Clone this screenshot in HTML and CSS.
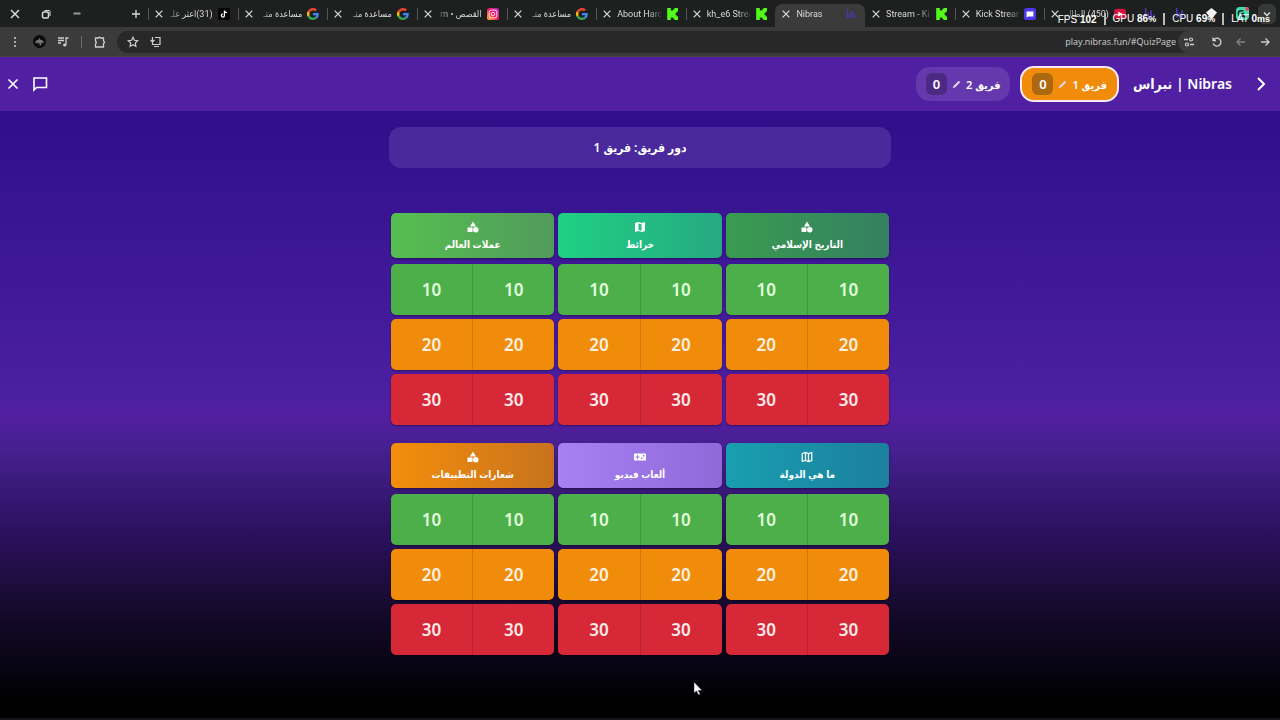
FILE: index.html
```html
<!DOCTYPE html>
<html lang="ar" dir="rtl">
<head>
<meta charset="utf-8">
<title>Nibras</title>
<link rel="stylesheet" href="styles.css">
</head>
<body>
<svg class="defs" aria-hidden="true">
  <symbol id="x" viewBox="0 0 12 12"><path d="M2 2l8 8M10 2l-8 8" fill="none" stroke="currentColor" stroke-width="1.500"/></symbol>
  <symbol id="google" viewBox="0 0 48 48"><path fill="#ea4335" d="M24 9.500c3.500 0 6.700 1.200 9.200 3.600l6.900-6.900C35.900 2.400 30.500 0 24 0 14.600 0 6.500 5.400 2.600 13.200l8 6.200C12.400 13.700 17.700 9.500 24 9.500z"/><path fill="#4285f4" d="M47 24.500c0-1.600-.2-3.100-.4-4.500H24v9h12.900c-.6 3-2.300 5.500-4.800 7.200l7.700 6C44.400 38 47 31.800 47 24.500z"/><path fill="#fbbc05" d="M10.500 28.600a14.500 14.500 0 010-9.200l-8-6.200a24 24 0 000 21.600z"/><path fill="#34a853" d="M24 48c6.500 0 11.900-2.100 15.900-5.800l-7.700-6c-2.200 1.500-4.900 2.300-8.200 2.300-6.300 0-11.600-4.200-13.500-9.900l-8 6.200C6.500 42.600 14.600 48 24 48z"/></symbol>
  <symbol id="kick" viewBox="0 0 10 10"><path fill="#53fc18" d="M1 0h3v2h2V1h1V0h3v3H9v1H8v2h1v1h1v3H7V9H6V8H4v2H1z"/></symbol>
  <symbol id="bars" viewBox="0 0 12 12"><path d="M2.500 1v9M5 5v5M7.500 3v7M10 7v3" fill="none" stroke="#4d37b0" stroke-width="1.500"/></symbol>
  <symbol id="shapes" viewBox="0 0 24 24"><path fill="currentColor" d="M12 1l6 10H6z"/><path fill="currentColor" d="M1 13h10v9H1z"/><circle cx="17.500" cy="17.500" r="5.500" fill="currentColor"/></symbol>
  <symbol id="map-solid" viewBox="0 0 24 24"><path fill="currentColor" fill-rule="evenodd" d="M2 4l6-2 8 2 6-2v18l-6 2-8-2-6 2zM9 5v13l6 1.500v-13z"/></symbol>
  <symbol id="map-line" viewBox="0 0 24 24"><path fill="none" stroke="currentColor" stroke-width="2.500" d="M2.500 5L9 3l6 2 6.500-2v16L15 21l-6-2-6.500 2zM9 3v16M15 5v16"/></symbol>
  <symbol id="gamepad" viewBox="0 0 24 24"><path fill="currentColor" fill-rule="evenodd" d="M1 5h22q1 0 1 1.500v11q0 1.500-1 1.500H1q-1 0-1-1.500v-11Q0 5 1 5zM6 8v3H3v2h3v3h2v-3h3v-2H8V8zM14 13v3h3v-3zM18 8v3h3V8z"/></symbol>
  <symbol id="pencil" viewBox="0 0 12 12"><path d="M1 11l1-3 7-7 2 2-7 7z" fill="currentColor"/></symbol>
</svg>

<header class="browser">
  <div class="tabstrip">
    <button class="tab-search" aria-label="Search tabs"><svg viewBox="0 0 12 12"><path d="M3 4.500l3 3 3-3" fill="none" stroke="currentColor" stroke-width="1.500"/></svg></button>
    <div class="pinned"><svg viewBox="0 0 14 14"><rect width="14" height="14" rx="4" fill="#42d9ab"/><path d="M8 4H5.500a3 3 0 000 6H8V7H6M10 9v3M8.500 10.500h3" fill="none" stroke="#10231e" stroke-width="1.500"/><circle cx="12" cy="2" r="2" fill="#f33c5e"/></svg></div>
    <div class="pinned"><svg viewBox="0 0 14 14"><path d="M7 1l6 5-6 7-6-7z" fill="#f2f2f2"/></svg></div>
    <div class="pinned"><svg><use href="#bars"/></svg></div>
    <div class="pinned"><svg><use href="#bars"/></svg></div>
    <div class="tab"><svg viewBox="0 0 14 14"><rect y="1" width="14" height="12" rx="4" fill="#d8123c"/><path d="M5 4l5 3-5 3z" fill="#fff"/></svg><span dir="rtl">(450) الطالب</span><button aria-label="Close tab"><svg><use href="#x"/></svg></button></div>
    <div class="tab"><svg viewBox="0 0 14 14"><rect width="14" height="14" rx="3" fill="#4b38e8"/><path d="M3 4h8v6H5l-2 1z" fill="#fff"/></svg><span dir="ltr">Kick Stream</span><button aria-label="Close tab"><svg><use href="#x"/></svg></button></div>
    <div class="tab before"><svg><use href="#kick"/></svg><span dir="ltr">Stream - Ki</span><button aria-label="Close tab"><svg><use href="#x"/></svg></button></div>
    <div class="tab active"><svg><use href="#bars"/></svg><span dir="ltr">Nibras</span><button aria-label="Close tab"><svg><use href="#x"/></svg></button></div>
    <div class="tab"><svg><use href="#kick"/></svg><span dir="ltr">kh_e6 Strea</span><button aria-label="Close tab"><svg><use href="#x"/></svg></button></div>
    <div class="tab"><svg><use href="#kick"/></svg><span dir="ltr">About Haro</span><button aria-label="Close tab"><svg><use href="#x"/></svg></button></div>
    <div class="tab"><svg><use href="#google"/></svg><span dir="rtl">مساعدة متـ</span><button aria-label="Close tab"><svg><use href="#x"/></svg></button></div>
    <div class="tab"><svg viewBox="0 0 14 14"><defs><linearGradient id="ig" x1="0" y1="1" x2="1" y2="0"><stop stop-color="#ffbe2e"/><stop offset=".5" stop-color="#f3195d"/><stop offset="1" stop-color="#b92bd0"/></linearGradient></defs><rect width="14" height="14" rx="3" fill="url(#ig)"/><rect x="2.500" y="2.500" width="9" height="9" rx="2.500" fill="none" stroke="#fff"/><circle cx="7" cy="7" r="2" fill="none" stroke="#fff"/></svg><span dir="rtl">القصص • m</span><button aria-label="Close tab"><svg><use href="#x"/></svg></button></div>
    <div class="tab"><svg><use href="#google"/></svg><span dir="rtl">مساعدة متـ</span><button aria-label="Close tab"><svg><use href="#x"/></svg></button></div>
    <div class="tab"><svg><use href="#google"/></svg><span dir="rtl">مساعدة متـ</span><button aria-label="Close tab"><svg><use href="#x"/></svg></button></div>
    <div class="tab"><svg viewBox="0 0 14 14"><rect width="14" height="14" rx="2" fill="#000"/><path d="M7.500 3v6a1.800 1.800 0 11-2-2M7.500 3q.5 2.500 3 2.500" fill="none" stroke="#fff" stroke-width="1.500"/></svg><span dir="rtl">(31)اعثر علـ</span><button aria-label="Close tab"><svg><use href="#x"/></svg></button></div>
    <div class="window-controls">
      <button class="new-tab" aria-label="New tab"><svg viewBox="0 0 12 12"><path d="M6 2v8M2 6h8" stroke="currentColor" stroke-width="1.300"/></svg></button>
      <button aria-label="Minimize"><svg viewBox="0 0 12 12"><path d="M2.500 5.500h7" stroke="#999" stroke-width="2"/></svg></button>
      <button aria-label="Restore"><svg viewBox="0 0 12 12"><rect x="2.500" y="4" width="6" height="6" rx="1.500" fill="none" stroke="currentColor" stroke-width="1.500"/><path d="M4.500 2.500H9q1 0 1 1V8" fill="none" stroke="currentColor"/></svg></button>
      <button aria-label="Close window"><svg><use href="#x"/></svg></button>
    </div>
    <div class="stats" dir="ltr"><span>FPS <b>102</b></span><i></i><span>GPU <b>86<small>%</small></b></span><i></i><span>CPU <b>69<small>%</small></b></span><i></i><span>LAT <b>0<small>ms</small></b></span></div>
  </div>
  <div class="toolbar">
    <button aria-label="Back"><svg viewBox="0 0 12 12"><path d="M2 6h8M6.500 2.500L10 6 6.500 9.500" fill="none" stroke="currentColor" stroke-width="1.300"/></svg></button>
    <button class="dim" aria-label="Forward"><svg viewBox="0 0 12 12"><path d="M10 6H2M5.500 2.500L2 6l3.500 3.500" fill="none" stroke="currentColor" stroke-width="1.300"/></svg></button>
    <button aria-label="Reload"><svg viewBox="0 0 12 12"><path d="M2.500 4a4 4 0 11-.3 3.500M2 1.500V4.500h3" fill="none" stroke="currentColor" stroke-width="1.300"/></svg></button>
    <div class="address">
      <button class="site" aria-label="Site settings"><svg viewBox="0 0 12 12"><path d="M1 3.500h4M7 8.500h4" stroke="currentColor" stroke-width="1.300"/><circle cx="8" cy="3.500" r="1.500" fill="none" stroke="currentColor" stroke-width="1.200"/><circle cx="4" cy="8.500" r="1.500" fill="none" stroke="currentColor" stroke-width="1.200"/></svg></button>
      <input dir="ltr" aria-label="Address" value="play.nibras.fun/#QuizPage">
      <button aria-label="Install"><svg viewBox="0 0 12 12"><path d="M6 1.500h5v7H3.500V6.500M5 10.500h5M3.500 1v5M1.500 4l2 2 2-2" fill="none" stroke="currentColor" stroke-width="1.200"/></svg></button>
      <button aria-label="Bookmark"><svg viewBox="0 0 12 12"><path d="M6 1.300l1.400 3 3.300.4-2.400 2.300.6 3.300L6 8.700l-2.900 1.600.6-3.300L1.300 4.700l3.300-.4z" fill="none" stroke="currentColor" stroke-width="1.200"/></svg></button>
    </div>
    <div class="tools">
      <button aria-label="Extensions"><svg viewBox="0 0 12 12"><path d="M1.500 2h3q1-1.500 2 0h3v3q2 1 0 2.500V11h-8V8q1.500-1.500 0-3z" fill="none" stroke="currentColor" stroke-width="1.300"/></svg></button>
      <span class="divider"></span>
      <button aria-label="Media"><svg viewBox="0 0 12 12"><path d="M1 2h6M1 4.500h6M1 7h3M9 9V2h2.500" fill="none" stroke="currentColor" stroke-width="1.300"/><circle cx="7.700" cy="9" r="1.600" fill="currentColor"/></svg></button>
      <button class="avatar" aria-label="Profile"><svg viewBox="0 0 14 14"><circle cx="7" cy="7" r="7" fill="#0b0b0b"/><path d="M2 9q1-4 4-4l1-2 1 2q3 0 4 4L9 8v3H7V8L5 10V8z" fill="#777"/></svg></button>
      <button aria-label="Menu"><svg viewBox="0 0 12 12"><g fill="currentColor"><circle cx="6" cy="2" r="1"/><circle cx="6" cy="6" r="1"/><circle cx="6" cy="10" r="1"/></g></svg></button>
    </div>
  </div>
</header>

<div class="app">
  <header class="appbar">
    <button class="icon" aria-label="رجوع"><svg viewBox="0 0 16 16"><path d="M5 2l6 6-6 6" fill="none" stroke="currentColor" stroke-width="2"/></svg></button>
    <h1>Nibras | نبراس</h1>
    <button class="team current">فريق 1<svg><use href="#pencil"/></svg><span class="score">0</span></button>
    <button class="team">فريق 2<svg><use href="#pencil"/></svg><span class="score">0</span></button>
    <div class="actions">
      <button class="icon" aria-label="رسائل"><svg viewBox="0 0 16 16"><path d="M2 2h12.500v9.500H4.500L2 14z" fill="none" stroke="currentColor" stroke-width="1.600"/></svg></button>
      <button class="icon" aria-label="إغلاق"><svg viewBox="0 0 16 16"><path d="M3.500 3.500l9 9M12.500 3.500l-9 9" fill="none" stroke="currentColor" stroke-width="1.700"/></svg></button>
    </div>
  </header>
  <main class="quiz">
    <p class="turn">دور فريق: فريق 1</p>
    <div class="board">
      <section class="category">
        <h2 class="history"><svg><use href="#shapes"/></svg>التاريخ الإسلامي</h2>
        <div class="pair easy"><button>10</button><button>10</button></div>
        <div class="pair medium"><button>20</button><button>20</button></div>
        <div class="pair hard"><button>30</button><button>30</button></div>
      </section>
      <section class="category">
        <h2 class="maps"><svg><use href="#map-solid"/></svg>خرائط</h2>
        <div class="pair easy"><button>10</button><button>10</button></div>
        <div class="pair medium"><button>20</button><button>20</button></div>
        <div class="pair hard"><button>30</button><button>30</button></div>
      </section>
      <section class="category">
        <h2 class="currency"><svg><use href="#shapes"/></svg>عملات العالم</h2>
        <div class="pair easy"><button>10</button><button>10</button></div>
        <div class="pair medium"><button>20</button><button>20</button></div>
        <div class="pair hard"><button>30</button><button>30</button></div>
      </section>
      <section class="category">
        <h2 class="country"><svg><use href="#map-line"/></svg>ما هي الدولة</h2>
        <div class="pair easy"><button>10</button><button>10</button></div>
        <div class="pair medium"><button>20</button><button>20</button></div>
        <div class="pair hard"><button>30</button><button>30</button></div>
      </section>
      <section class="category">
        <h2 class="games"><svg><use href="#gamepad"/></svg>ألعاب فيديو</h2>
        <div class="pair easy"><button>10</button><button>10</button></div>
        <div class="pair medium"><button>20</button><button>20</button></div>
        <div class="pair hard"><button>30</button><button>30</button></div>
      </section>
      <section class="category">
        <h2 class="logos"><svg><use href="#shapes"/></svg>شعارات التطبيقات</h2>
        <div class="pair easy"><button>10</button><button>10</button></div>
        <div class="pair medium"><button>20</button><button>20</button></div>
        <div class="pair hard"><button>30</button><button>30</button></div>
      </section>
    </div>
  </main>
</div>
<svg class="cursor" viewBox="0 0 10 15" aria-hidden="true"><path d="M1 1v11l2.500-2 2 4 1.700-1-2-3.500H9z" fill="#fff" stroke="#222" stroke-width=".5"/></svg>
</body>
</html>
```
FILE: styles.css
```css
* { box-sizing: border-box; }
body {
  margin: 0;
  min-height: 100vh;
  display: flex;
  flex-direction: column;
  font-family: "Noto Sans", "DejaVu Sans Condensed", "DejaVu Sans", sans-serif;
  color: #fff;
  background: #000;
}
button, input { font: inherit; color: inherit; background: none; border: 0; padding: 0; margin: 0; }
button { display: flex; align-items: center; justify-content: center; cursor: pointer; }
svg { display: block; flex: none; width: 12px; height: 12px; }
.defs { position: absolute; width: 0; height: 0; }

/* Browser frame */
.browser { background: #3b3b3b; color: #dadada; font-family: Roboto, "DejaVu Sans Condensed", "DejaVu Sans", sans-serif; }
.tabstrip { position: relative; display: flex; align-items: center; height: 27px; padding-right: 4px; background: #1e201f; }
.tab-search { width: 18px; height: 20px; border-radius: 6px; background: #373838; }
.pinned { width: 31px; display: flex; justify-content: center; }
.pinned svg { width: 13px; height: 13px; }
.tab {
  flex: 1 1 0;
  min-width: 0;
  align-self: stretch;
  display: flex;
  align-items: center;
  gap: 5px;
  padding: 0 8px 0 6px;
  font-size: 9px;
  background: linear-gradient(#555, #555) left center / 1px 12px no-repeat;
}
.tab > svg { width: 12px; height: 12px; }
.tab span {
  flex: 1;
  min-width: 0;
  white-space: nowrap;
  -webkit-mask-image: linear-gradient(to right, #000 70%, #0003);
  mask-image: linear-gradient(to right, #000 70%, #0003);
}
.tab span[dir="rtl"] {
  -webkit-mask-image: linear-gradient(to left, #000 70%, #0003);
  mask-image: linear-gradient(to left, #000 70%, #0003);
}
.tab button svg { width: 10px; height: 10px; }
.tab.before { background: none; }
.tab.active { margin-top: 4px; height: 23px; align-self: auto; padding-bottom: 4px; border-radius: 7px 7px 0 0; background: #3b3b3b; }
.window-controls { width: 148px; display: flex; justify-content: flex-end; }
.window-controls button { width: 31px; }
.window-controls .new-tab { width: 24px; margin-left: auto; }
.stats {
  position: absolute;
  top: 11px;
  right: 10px;
  display: flex;
  align-items: center;
  gap: 7px;
  color: #fff;
  font: 10px/15px "Liberation Sans", sans-serif;
  white-space: nowrap;
}
.stats i { width: 2px; height: 12px; background: #bbb; }
.stats small { font-size: 9px; }
.toolbar { display: flex; align-items: center; height: 30px; padding: 0 3px; color: #cfcfcf; border-bottom: 1px solid #4a4145; }
.toolbar button { width: 24px; height: 24px; }
.toolbar .dim { color: #838383; }
.address { flex: 1; display: flex; align-items: center; height: 22px; padding: 0 0 0 5px; margin: 0 5px; border-radius: 11px; background: #282828; }
.address input { flex: 1; min-width: 0; text-align: right; font-family: "Open Sans", sans-serif; font-size: 9px; padding: 0 2px; }
.address button { width: 22px; height: 22px; }
.address .site { border-radius: 50%; background: #3b3b3b; }
.tools { display: flex; align-items: center; }
.tools .divider { width: 1px; height: 12px; margin: 0 6px; background: #6b6b6b; }
.tools .avatar svg { width: 13px; height: 13px; }

/* Quiz application */
.app { flex: 1; display: flex; flex-direction: column; background: #000; }
.appbar { display: flex; align-items: center; height: 54px; padding: 0 11px 0 5px; background: #511fa2; }
.icon { width: 16px; height: 16px; }
.icon svg { width: 16px; height: 16px; }
.appbar h1 { margin: 0 21px 0 14px; font-size: 14px; line-height: 24px; font-weight: 600; }
.team {
  height: 34px;
  margin-left: 10px;
  padding: 0 10px;
  gap: 5px;
  border-radius: 14px;
  background: #6539ad;
  font-size: 11px;
  font-weight: 600;
  white-space: nowrap;
}
.team svg { width: 9px; height: 9px; color: #e4d3ee; }
.team.current { height: 36px; border: 2px solid #fbe9f4; background: #f08c0a; }
.score { width: 21px; height: 22px; line-height: 22px; border-radius: 6px; background: #4c2a84; font-size: 13px; }
.current .score { background: #aa680f; }
.actions { margin-right: auto; display: flex; gap: 11px; }
.quiz {
  flex: 1;
  padding: 16px 16px 62px;
  display: flex;
  flex-direction: column;
  align-items: center;
  border-bottom: 2px solid #15151b;
  background: linear-gradient(#2f0f8b, #4b1fa0 47%, #521fa2 50%, #45208e 56%, #2c1160 69%, #180b30 81%, #04030e 93%, #000 97%);
}
.turn {
  width: 100%;
  max-width: 502px;
  margin: 0 0 45px;
  padding: 10px;
  border-radius: 12px;
  background: #49299b;
  text-align: center;
  font-size: 12px;
  line-height: 21px;
  font-weight: 600;
}
.board { width: 100%; max-width: 498px; display: grid; grid-template-columns: repeat(3, 1fr); gap: 18px 4px; }
.category { display: flex; flex-direction: column; gap: 4px; }
.category h2 {
  height: 45px;
  margin: 0 0 2px;
  padding-top: 8px;
  display: flex;
  flex-direction: column;
  align-items: center;
  gap: 3px;
  border-radius: 5px;
  font-size: 10px;
  line-height: 16px;
  font-weight: 600;
  box-shadow: 0 1px 2px #0006;
}
.history { background: linear-gradient(to right, #3a9b50, #348062); }
.maps { background: linear-gradient(to right, #1fd083, #26a982); }
.currency { background: linear-gradient(to right, #56bf50, #519b5b); }
.country { background: linear-gradient(to right, #189fb0, #1c7f9e); }
.games { background: linear-gradient(to right, #a781f4, #8f69d8); }
.logos { background: linear-gradient(to right, #f38e0b, #c8721d); }
.pair { display: flex; height: 51px; border-radius: 5px; overflow: hidden; box-shadow: 0 1px 2px #0006; }
.pair button { flex: 1; font-size: 17px; font-weight: 600; }
.pair button + button { border-right: 1px solid #0002; }
.easy { background: #4caf4a; color: #e2ffdc; }
.medium { background: #f08c0a; color: #fff1e0; }
.hard { background: #d72838; color: #ffeaea; }
.cursor { position: absolute; left: 693px; top: 681px; width: 10px; height: 15px; }
```
